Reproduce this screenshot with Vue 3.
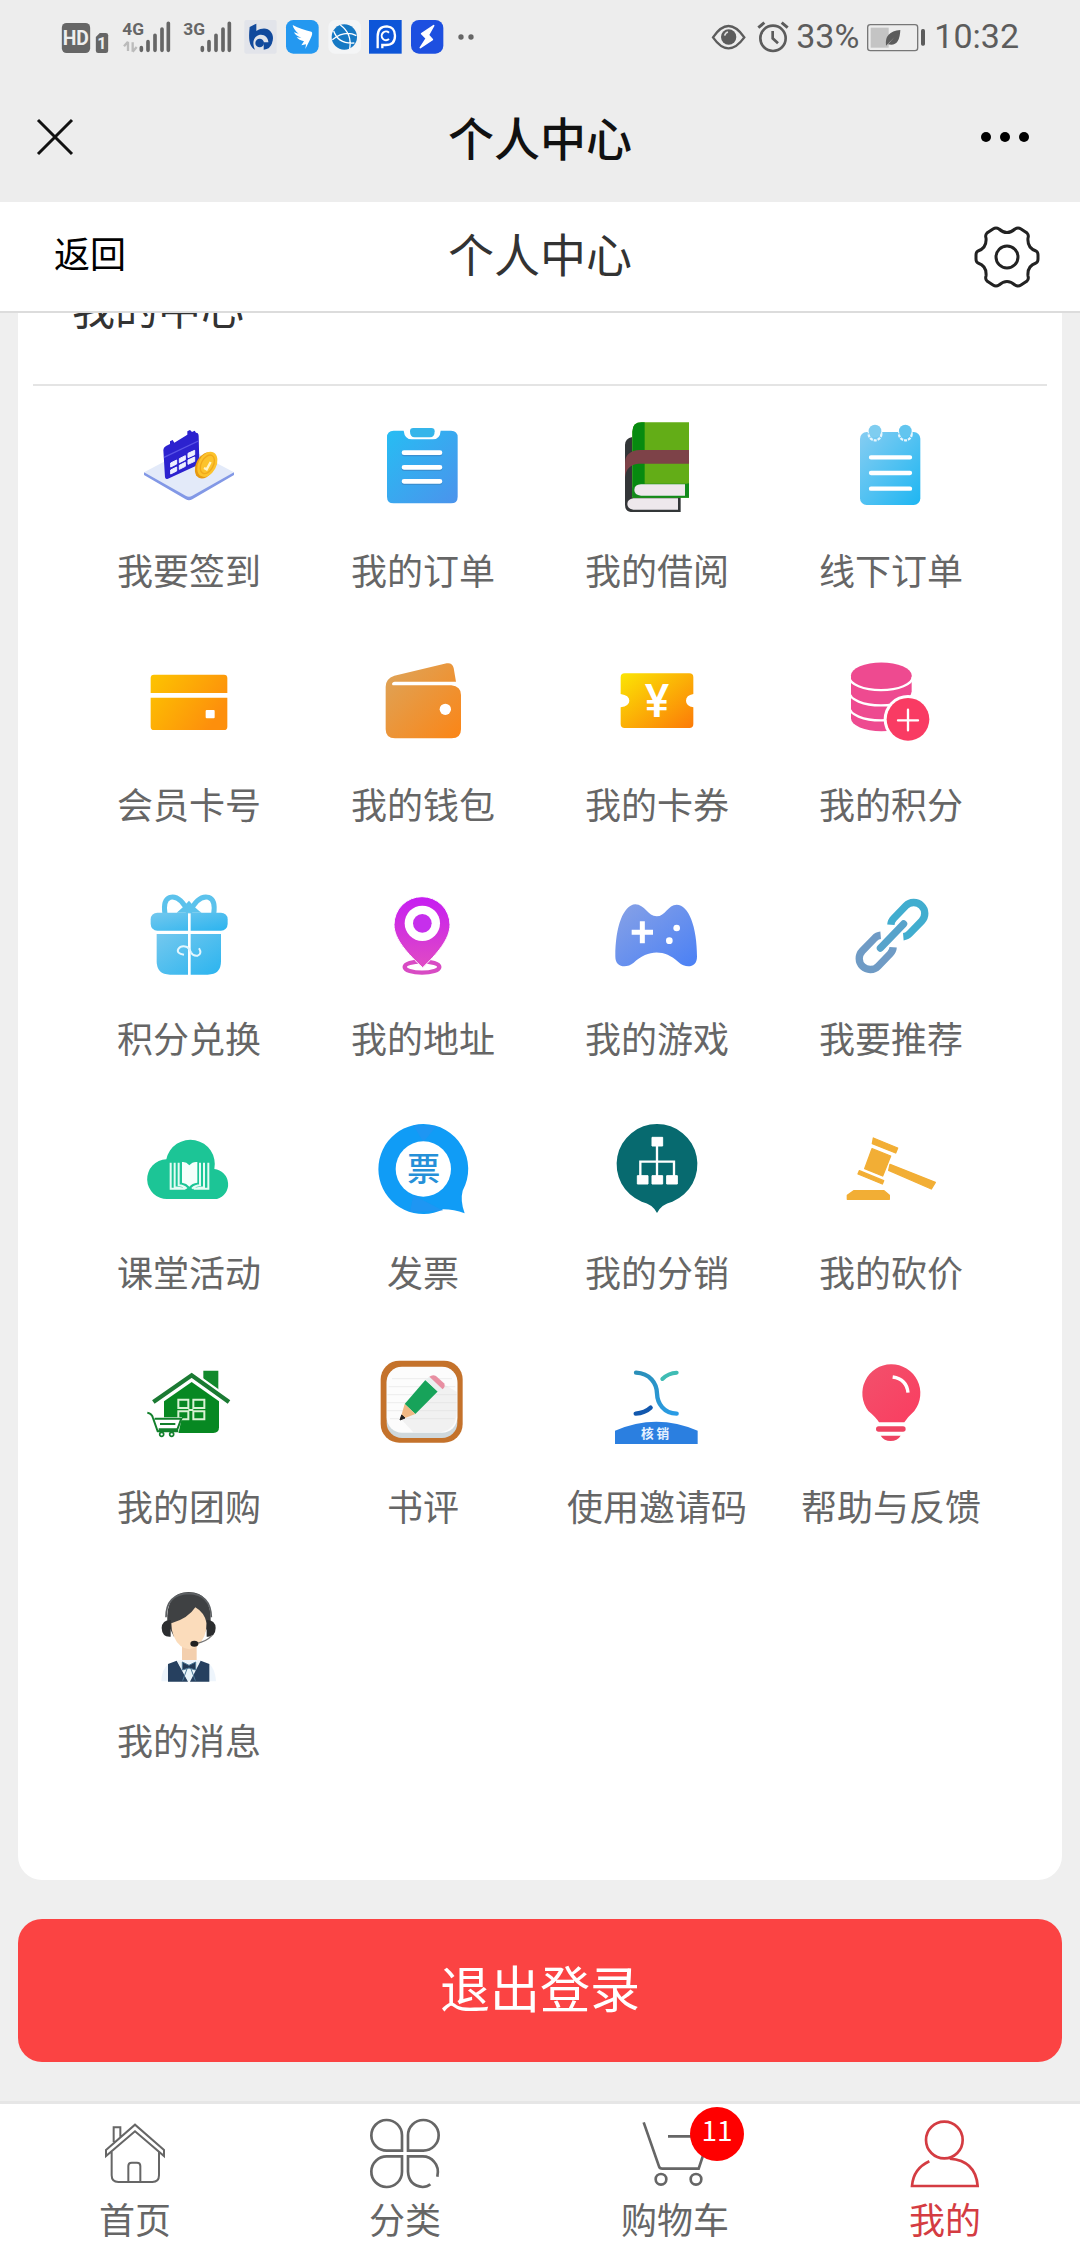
<!-- PersonalCenter -->
<template>
  <div class="page">
    <header class="header">
      <div class="status-bar">
        <div class="status-group status-left">
          <svg class="status-hd" viewBox="180 51 141 108">
            <rect x="181" y="66" width="85" height="90" rx="14" fill="#666" />
            <text x="223" y="132" text-anchor="middle" font-size="58" font-weight="700" fill="#eee">HD</text>
            <path d="M283 108l12-12h18q7 0 7 7v46q0 7-7 7h-23q-7 0-7-7z" fill="#666" />
            <text x="301" y="144" text-anchor="middle" font-size="48" font-weight="700" fill="#eee">1</text>
          </svg>
          <svg v-for="net in networks" :key="net" class="status-signal" viewBox="351 51 147 108">
            <text x="355" y="102" font-size="52" font-weight="700" fill="#666">{{ net }}</text>
            <path v-if="net === '4G'" d="M372 122v28M372 122l-12 14M386 152v-28M386 152l12-14" stroke="#bbb" stroke-width="7" fill="none" />
            <path d="M412 140v8M432 122v26M453 103v45M474 84v64M493 67v81" stroke="#666" stroke-width="11" stroke-linecap="round" />
          </svg>
          <div class="status-apps">
            <svg viewBox="702 51 108 108">
              <rect x="706" y="57" width="97" height="101" rx="6" fill="#e2e4ea" />
              <path d="M722 78l20-10v22c30-18 50 0 50 22 0 12-6 20-14 24 4-26-12-38-28-34-16 5-22 22-12 44-18-10-20-32-16-68z" fill="#124a9c" />
              <circle cx="752" cy="126" r="13" fill="#124a9c" />
              <path d="M764 124h26q-6 22-26 22" fill="#124a9c" />
            </svg>
            <svg viewBox="825 51 108 108">
              <rect x="828" y="57" width="98" height="101" rx="22" fill="#2498f0" />
              <path d="M848 72c18 10 38 16 56 20 5 3 2 12-4 24l-14 28 2-14-14 3 8-12c-10-2-18-6-22-12l14 1c-12-4-20-10-22-16l14 4c-10-8-16-16-18-26z" fill="#fff" />
            </svg>
            <svg viewBox="948 51 108 108">
              <rect x="952" y="57" width="98" height="101" rx="20" fill="#f4f5f6" />
              <circle cx="1000" cy="108" r="38" fill="#1679c4" />
              <path d="M988 72q36 26 28 72M964 116q38-30 72-12M968 90q14 40 62 36" stroke="#fff" stroke-width="4" fill="none" />
            </svg>
            <svg viewBox="1071 51 108 108">
              <rect x="1071" y="57" width="98" height="101" fill="#0d55d8" />
              <path d="M1097 142v-36q0-30 28-30 24 2 24 28 0 28-28 28h-10v10" stroke="#fff" stroke-width="7" fill="none" />
              <path d="M1131 95a13 13 0 1 0 0 19" stroke="#fff" stroke-width="6" fill="none" />
            </svg>
            <svg viewBox="1194 51 108 108">
              <rect x="1194" y="57" width="97" height="101" rx="24" fill="#1d4fe0" />
              <path d="M1262 74l-36 24 14 14-18 28 36-24-12-14z" fill="#fff" stroke="#fff" stroke-width="5" stroke-linejoin="round" />
            </svg>
          </div>
          <svg class="status-more" viewBox="1335 51 45 108">
            <circle cx="1341" cy="108" r="8" fill="#666" />
            <circle cx="1371" cy="108" r="8" fill="#666" />
          </svg>
        </div>
        <div class="status-group status-right">
          <svg class="status-icon" viewBox="150 51 108 108">
            <path d="M165 109q46-68 94 0q-48 66-94 0z" fill="none" stroke="#5c5c5c" stroke-width="7" />
            <circle cx="212" cy="108" r="23" fill="#5c5c5c" />
            <path d="M200 104q2-9 10-11" stroke="#ddd" stroke-width="5" fill="none" />
          </svg>
          <svg class="status-icon" viewBox="279 51 108 108">
            <circle cx="342" cy="112" r="38" fill="none" stroke="#5c5c5c" stroke-width="8" />
            <path d="M298 80l18-15M368 65l18 15" stroke="#5c5c5c" stroke-width="9" />
            <path d="M341 90v22l16 15" stroke="#5c5c5c" stroke-width="8" fill="none" />
          </svg>
          <span class="status-text">33%</span>
          <svg class="status-battery" viewBox="621 51 177 108">
            <rect x="623" y="71" width="150" height="78" rx="8" fill="none" stroke="#777" stroke-width="4" />
            <rect x="632" y="80" width="54" height="60" fill="#c4c4c4" />
            <path d="M678 134q-6-42 43-47q-2 52-37 43l20-22z" fill="#5c5c5c" />
            <rect x="783" y="84" width="12" height="50" rx="5" fill="#5c5c5c" />
          </svg>
          <span class="status-text">10:32</span>
        </div>
      </div>
      <div class="nav-bar">
        <button class="icon-button" type="button" aria-label="关闭">
          <svg class="close-icon" viewBox="0 0 38 38">
            <path d="M2 2l34 34M36 2L2 36" stroke="#111" stroke-width="3" />
          </svg>
        </button>
        <h1 class="nav-title">个人中心</h1>
        <button class="icon-button nav-more" type="button" aria-label="更多">
          <svg class="more-icon" viewBox="0 0 50 12">
            <circle cx="6" cy="6" r="5" />
            <circle cx="25" cy="6" r="5" />
            <circle cx="44" cy="6" r="5" />
          </svg>
        </button>
      </div>
      <div class="app-bar">
        <button class="back-button" type="button">返回</button>
        <h2 class="app-title">个人中心</h2>
        <button class="icon-button settings" type="button" aria-label="设置">
          <svg class="gear-icon" viewBox="0 0 66 62">
            <path
              d="M19 3Q22 1 25 3Q33 10 41 3Q44 1 47 3L53 7Q55 9 54 12Q53 22 62 25Q64 26 64 29V33Q64 36 62 37Q53 40 54 50Q55 53 53 55L47 59Q44 61 41 59Q33 52 25 59Q22 61 19 59L13 55Q11 53 12 50Q13 40 4 37Q2 36 2 33V29Q2 26 4 25Q13 22 12 12Q11 9 13 7Z"
              fill="none" stroke="#222" stroke-width="3" />
            <circle cx="33" cy="31" r="11" fill="none" stroke="#222" stroke-width="3" />
          </svg>
        </button>
      </div>
    </header>

    <main class="content">
      <section class="card">
        <h3 class="card-title">我的中心</h3>
        <div class="menu-grid">
          <a v-for="item in menu" :key="item.label" class="menu-item" href="#">
            <svg class="menu-icon" :viewBox="item.box" v-html="item.icon"></svg>
            <span class="menu-label">{{ item.label }}</span>
          </a>
        </div>
      </section>
      <button class="logout" type="button">退出登录</button>
    </main>

    <nav class="tab-bar">
      <a
        v-for="tab in tabs"
        :key="tab.label"
        class="tab"
        :class="{ active: tab.active }"
        href="#"
      >
        <span class="tab-icon-wrap">
          <svg class="tab-icon" :viewBox="tab.box" v-html="tab.icon"></svg>
          <span v-if="tab.badge" class="badge">{{ tab.badge }}</span>
        </span>
        <span class="tab-label">{{ tab.label }}</span>
      </a>
    </nav>
  </div>
</template>

<script setup>
const networks = ['4G', '3G'];

const gradient = (id, from, to, x2 = 1, y2 = 1) =>
  `<linearGradient id="${id}" x1="0" y1="0" x2="${x2}" y2="${y2}"><stop offset="0" stop-color="${from}"/><stop offset="1" stop-color="${to}"/></linearGradient>`;

const menu = [
  {
    label: '我要签到',
    box: '132 66 270 270',
    icon: `
      <path d="M132 217v8l125 73q10 6 20 0l125-73v-8z" fill="#8298e6"/>
      <path d="M132 217l126-66q9-5 18 0l126 66-125 70q-10 6-20 0z" fill="#e3eaf9"/>
      <path d="M190 150q0-8 8-12l12-6v-8l8-4 5 8 39-24v-10l8-4 6 6 8-4 4 6q8 0 8 10l2 78q0 6-6 10l-88 40q-7 4-9-4z" fill="#2c22cf"/>
      <path d="M192 172l103-49" stroke="#5b55e6" stroke-width="4"/>
      <path d="M212 189l18-9v12l-18 9zM238 176l18-9v12l-18 9zM264 160l20-9v13l-20 9zM212 210l18-9v12l-18 9zM238 196l18-9v12l-18 9zM264 180l20-9v13l-20 9z" fill="#eef0ff" stroke="#eef0ff" stroke-width="3"/>
      <ellipse cx="316" cy="196" rx="28" ry="42" transform="rotate(28 316 196)" fill="#e79a12"/>
      <ellipse cx="322" cy="193" rx="27" ry="40" transform="rotate(28 322 193)" fill="#fcc32c"/>
      <ellipse cx="322" cy="193" rx="18" ry="30" transform="rotate(28 322 193)" fill="none" stroke="#f0a91c" stroke-width="4"/>
      <path d="M312 204l8 4 12-22" stroke="#fff3c4" stroke-width="7" fill="none"/>`
  },
  {
    label: '我的订单',
    box: '834 66 270 270',
    icon: `${gradient('order', '#27bdf3', '#4b93ec')}
      <path d="M881 92h30q3 26 25 26h62q22 0 24-26h31q20 0 20 20v178q0 20-20 20H881q-20 0-20-20V112q0-20 20-20z" fill="url(#order)"/>
      <path d="M940 84h54q10 0 10 10 0 18-14 18h-46q-14 0-14-18 0-10 10-10z" fill="#35b5ea"/>
      <path d="M912 162h108M912 206h108M912 248h108" stroke="#3a8fd0" stroke-width="14" stroke-linecap="round"/>
      <path d="M912 158h108M912 202h108M912 244h108" stroke="#fff" stroke-width="14" stroke-linecap="round"/>`
  },
  {
    label: '我的借阅',
    box: '156 66 270 270',
    icon: `
      <path d="M195 135q0-20 22-24v180h145v45H212q-17-2-17-22z" fill="#333638"/>
      <path d="M217 95q0-28 28-28h142v226H217z" fill="#63ad17"/>
      <path d="M217 95q0-28 28-28h9v185l-20 8-17 30z" fill="#078a10"/>
      <path d="M387 150H240q-45 2-45 40v42q4-38 40-41h152z" fill="#7d4248"/>
      <path d="M387 250v43H217v-30l20-12h142z" fill="#128a1c"/>
      <path d="M243 253h132v34H243q-20-2-20-17 0-16 20-17z" fill="#eee8ec"/>
      <path d="M220 295h134v34H220q-18-3-18-17t18-17z" fill="#eee8ec"/>`
  },
  {
    label: '线下订单',
    box: '858 66 270 270',
    icon: `${gradient('offline', '#86cdf2', '#1eb6f2')}
      <rect x="900" y="96" width="181" height="219" rx="20" fill="url(#offline)"/>
      <circle cx="945" cy="102" r="19" fill="none" stroke="#e8f6fd" stroke-width="7" stroke-dasharray="9 3"/>
      <circle cx="1036" cy="102" r="19" fill="none" stroke="#e8f6fd" stroke-width="7" stroke-dasharray="9 3"/>
      <circle cx="945" cy="93" r="19" fill="#7fcdf0"/>
      <circle cx="1036" cy="93" r="19" fill="#62c5ef"/>
      <path d="M933 172h117M933 219h117M933 266h117" stroke="#fff" stroke-width="13" stroke-linecap="round"/>`
  },
  {
    label: '会员卡号',
    box: '132 768 270 270',
    icon: `${gradient('card', '#fdc400', '#fd8f0c', 1, 0.5)}
      <path d="M162 824h210q10 0 10 10v45H152v-45q0-10 10-10zM152 893h230v87q0 10-10 10H162q-10 0-10-10z" fill="url(#card)"/>
      <rect x="317" y="930" width="27" height="25" rx="3" fill="#fff"/>`
  },
  {
    label: '我的钱包',
    box: '834 768 270 270',
    icon: `${gradient('wallet', '#dca55c', '#fb8516')}
      <path d="M857 860q0-24 26-33l157-37q17-3 21 14l7 41H884q-12 3-6 11h176q29 3 29 29v103q0 27-28 27H885q-28 0-28-27z" fill="url(#wallet)"/>
      <circle cx="1036" cy="928" r="17" fill="#fff"/>`
  },
  {
    label: '我的卡券',
    box: '156 768 270 270',
    icon: `${gradient('coupon', '#fbe504', '#fc7a08')}
      <path d="M194 820h194q12 0 12 12v50q-22 4-22 20t22 20v50q0 12-12 12H194q-12 0-12-12v-50q26-4 26-20t-26-20v-50q0-12 12-12z" fill="url(#coupon)"/>
      <text x="291" y="951" text-anchor="middle" font-family="Roboto" font-weight="500" font-size="138" fill="#fff">¥</text>`
  },
  {
    label: '我的积分',
    box: '858 768 270 270',
    icon: `
      <path d="M873 826a90 38 0 0 1 182 0v129a90 38 0 0 1-182 0z" fill="#ee4a90"/>
      <path d="M868 831a92 38 0 0 0 190 0M868 877a92 38 0 0 0 190 0M868 922a92 38 0 0 0 190 0" fill="none" stroke="#fff" stroke-width="7"/>
      <circle cx="1044" cy="958" r="73" fill="#fff"/>
      <circle cx="1044" cy="958" r="64" fill="#f93b63"/>
      <path d="M1014 961h60M1044 929v62" stroke="#fff" stroke-width="7" stroke-linecap="round"/>`
  },
  {
    label: '积分兑换',
    box: '132 90 270 270',
    icon: `${gradient('gift', '#74c8ee', '#2bb4ef')}
      <path d="M266 158Q240 104 210 112q-22 8-15 50M268 158q26-54 58-46 22 8 15 50" fill="none" stroke="#5cc2ec" stroke-width="15"/>
      <path d="M230 158q18-14 37-36 20 24 38 36z" fill="#5cc2ec"/>
      <rect x="152" y="158" width="231" height="54" rx="20" fill="url(#gift)"/>
      <path d="M170 222h193v82q0 40-40 40H210q-40 0-40-40z" fill="url(#gift)"/>
      <path d="M268 160v186" stroke="#fff" stroke-width="8"/>
      <path d="M252 284q-24-4-17-17 8-12 26-6 8 4 12 16 6 12 20 10 14-6 4-22" fill="none" stroke="#e3f6fe" stroke-width="6"/>`
  },
  {
    label: '我的地址',
    box: '834 90 270 270',
    icon: `${gradient('pin', '#c61df2', '#e04bc4', 0, 1)}
      <ellipse cx="966" cy="321" rx="52" ry="17" fill="none" stroke="#d84bc4" stroke-width="13"/>
      <path d="M966 110a84 84 0 0 1 84 84c0 44-40 88-82 129-44-41-86-85-86-129a84 84 0 0 1 84-84z" fill="url(#pin)" stroke="#fff" stroke-width="3"/>
      <circle cx="967" cy="190" r="53" fill="#fff"/>
      <circle cx="967" cy="190" r="28" fill="#c62fec"/>`
  },
  {
    label: '我的游戏',
    box: '156 90 270 270',
    icon: `${gradient('game', '#88a2e6', '#4a80f5')}
      <path d="M166 290c0-90 24-155 60-157 28 0 38 36 64 36s34-35 60-35c36 0 61 66 61 156 0 32-32 38-56 16-42-38-90-38-134 2-22 18-55 14-55-18z" fill="url(#game)"/>
      <path d="M247 184v66M215 217h64" stroke="#fff" stroke-width="15"/>
      <circle cx="350" cy="204" r="10" fill="#fff"/>
      <circle cx="328" cy="242" r="10" fill="#fff"/>`
  },
  {
    label: '我要推荐',
    box: '858 90 270 270',
    icon: `
      <g transform="translate(996 228) rotate(-46)" fill="none" stroke-width="22">
        <path d="M-22-26q-8-7-20-7h-52a33 33 0 0 0 0 66h52q12 0 20-7" stroke="#6f9bc5"/>
        <path d="M22-26q8-7 20-7h52a33 33 0 0 1 0 66H42q-12 0-20-7" stroke="#41adcf"/>
        <path d="M-50 0H50" stroke="#57a3cb" stroke-linecap="round"/>
      </g>`
  },
  {
    label: '课堂活动',
    box: '132 792 270 270',
    icon: `
      <path d="M203 1017a59 59 0 0 1-4-119 73 73 0 0 1 144 29 46 46 0 0 1 8 90z" fill="#1cc596"/>
      <path d="M268 916q-10-12-22-10v62q14 2 22 12 8-10 24-12v-62q-14-2-24 10z" fill="#f4fffb"/>
      <path d="M236 908v68q14 0 24 10M224 908v74l30 4M212 908v78h44M300 908v68q-14 0-24 10M312 908v74l-30 4M325 908v78h-44" fill="none" stroke="#e6fbf4" stroke-width="6"/>`
  },
  {
    label: '发票',
    box: '834 792 270 270',
    icon: `
      <path d="M970 792a135 135 0 0 1 118 200q-8 30 6 68-32-12-64-12a135 135 0 1 1-60-256z" fill="#109cf6"/>
      <path d="M940 796l30 50 40-48zM930 1056l10-50 90 46z" fill="#2b8ff0" opacity="0.5"/>
      <circle cx="970" cy="927" r="83" fill="#fff"/>
      <text x="971" y="964" text-anchor="middle" font-size="100" font-weight="500" fill="#2590d8">票</text>`
  },
  {
    label: '我的分销',
    box: '156 792 270 270',
    icon: `
      <path d="M291 792a121 121 0 0 1 46 233q-34 8-46 34-12-26-46-34a121 121 0 0 1 46-233z" fill="#076a6f"/>
      <path d="M291 850v105M241 955v-50h101v50" fill="none" stroke="#fff" stroke-width="7"/>
      <path d="M276 832h32v26h-32zM232 947h32v25h-32zM276 947h32v25h-32zM320 947h32v25h-32z" fill="#fff" stroke="#fff" stroke-width="3" stroke-linejoin="round"/>`
  },
  {
    label: '我的砍价',
    box: '858 792 270 270',
    icon: `
      <g fill="#f2ae35" stroke="#f2ae35" stroke-width="4" stroke-linejoin="round">
        <path d="M940 834l73 30-6 15-70-28z"/>
        <path d="M936 866l56 22-24 60-54-22z"/>
        <path d="M898 932l73 30-4 10-73-30z"/>
        <path d="M990 913l136 54-12 20-128-56z"/>
        <path d="M882 992h90l16 14v12H862v-12z"/>
      </g>`
  },
  {
    label: '我的团购',
    box: '132 84 270 270',
    icon: `
      <path d="M310 122h45v66l-45-32z" fill="#128a2c"/>
      <path d="M192 214l83-58 82 58v78q0 17-17 17H192z" fill="#078822"/>
      <path d="M160 216l115-80 112 80" fill="none" stroke="#fff" stroke-width="26"/>
      <path d="M160 216l115-80 112 80" fill="none" stroke="#1b7a33" stroke-width="13"/>
      <path d="M235 209h30v25h-30zM280 209h33v25h-33zM235 244h30v24h-30zM280 244h33v24h-33zM265 240h15" fill="none" stroke="#d9f2d4" stroke-width="6"/>
      <path d="M160 262h86l-12 54h-62z" fill="#fff"/>
      <path d="M142 248q14 2 17 16l14 40h62M164 266h80l-12 32h-56M180 282h46" fill="none" stroke="#12802c" stroke-width="6"/>
      <circle cx="185" cy="313" r="6" fill="#fff" stroke="#12802c" stroke-width="5"/>
      <circle cx="215" cy="313" r="6" fill="#fff" stroke="#12802c" stroke-width="5"/>`
  },
  {
    label: '书评',
    box: '834 84 270 270',
    icon: `
      <rect x="842" y="92" width="246" height="246" rx="56" fill="#c4722b"/>
      <rect x="860" y="112" width="212" height="212" rx="46" fill="#cfd8dc"/>
      <rect x="860" y="110" width="212" height="198" rx="46" fill="#fcfcfc"/>
      <path d="M876 146h180M866 170h200M862 194h208M862 218h208M862 242h208M870 266h194" stroke="#ececec" stroke-width="3"/>
      <path d="M1035 165l35 20v60q0 55-50 62h-80l-35-38 40-20z" fill="#ddd" opacity="0.35"/>
      <path d="M976 150l38 34-68 68-32-30z" fill="#17a35a"/>
      <path d="M914 222l32 30-46 18z" fill="#f0b884"/>
      <path d="M905 255l10 9-15 6z" fill="#222" stroke="#222" stroke-width="3"/>
      <path d="M976 150l12-10 40 36-14 10z" fill="#e9efef"/>
      <path d="M988 140q10-8 20-2l24 22q6 8-4 18z" fill="#e88fa2"/>`
  },
  {
    label: '使用邀请码',
    box: '156 84 270 270',
    icon: `${gradient('code', '#2a8fb8', '#2a9ce6')}
      <path d="M228 128c42 2 62 32 63 62s20 60 59 61" fill="none" stroke="url(#code)" stroke-width="13" stroke-linecap="round"/>
      <path d="M307 147q18-18 43-19" fill="none" stroke="#3fbcb4" stroke-width="12" stroke-linecap="round"/>
      <path d="M227 251q28-2 45-18" fill="none" stroke="#1258ae" stroke-width="13" stroke-linecap="round"/>
      <path d="M165 342v-40q124-54 248 0v40z" fill="#2b7fe0"/>
      <text x="285" y="325" text-anchor="middle" font-size="38" font-weight="700" fill="#e6f1ff">核 销</text>`
  },
  {
    label: '帮助与反馈',
    box: '858 84 270 270',
    icon: `${gradient('bulb', '#f2516c', '#fa3d60')}
      <path d="M993 103a87 87 0 0 1 70 140q-20 18-30 34h-76q-10-16-32-34a87 87 0 0 1 68-140z" fill="url(#bulb)"/>
      <path d="M998 141q42 6 46 47" fill="none" stroke="#fff" stroke-width="10"/>
      <rect x="948" y="289" width="89" height="16" rx="8" fill="#ee4462"/>
      <path d="M962 317h60q-10 16-30 16t-30-16z" fill="#ee4462"/>`
  },
  {
    label: '我的消息',
    box: '132 786 270 270',
    icon: `
      <path d="M202 880q-6-94 64-94t66 94l-20 30-90 10z" fill="#3f4143"/>
      <path d="M246 930h44v62l-22 16-22-16z" fill="#f3cfae"/>
      <path d="M214 880q50-14 72-48 28 16 34 48 0 44-28 68-24 20-50 0-28-24-28-68z" fill="#fbdcbb"/>
      <path d="M198 862q0-70 68-72 66 2 68 72" fill="none" stroke="#5d6063" stroke-width="5"/>
      <path d="M212 870v50q-26 2-27-26 1-24 27-24zM320 870v50q26 2 27-26-1-24-27-24z" fill="#2b2d2f"/>
      <path d="M336 916q-18 20-48 24" fill="none" stroke="#777" stroke-width="4"/>
      <ellipse cx="283" cy="941" rx="12" ry="9" fill="#222"/>
      <path d="M184 1054q0-36 22-52l30-12h62l30 12q18 16 20 52z" fill="#eef5fc"/>
      <path d="M204 1002l26-10 34 63h-60zM328 1002l-26-10-32 63h58z" fill="#26405f"/>
      <path d="M232 992l34 63 32-63-32 14z" fill="#e7f3f8"/>
      <path d="M247 996l20 10 20-10v24l-20-6-20 6zM262 1014l-14 38M272 1014l14 38" fill="#233a56" stroke="#4c7896" stroke-width="3"/>`
  }
];

const tabs = [
  {
    label: '首页',
    box: '117 78 216 216',
    icon: `<g fill="none" stroke="currentColor" stroke-width="6">
      <path d="M161 156v-44h20v30M138 180l87-76 87 76v18l-87-74-87 74zM155 186v70q0 20 20 20h102q20 0 20-20v-70M205 276v-48q0-10 10-10h16q10 0 10 10v48"/>
    </g>`
  },
  {
    label: '分类',
    box: '927 78 216 216',
    icon: `<g fill="none" stroke="currentColor" stroke-width="8">
      <path d="M1026 182h-44a46 46 0 1 1 44-46zM1044 182v-46a46 46 0 1 1 46 46zM1026 199h-44a46 46 0 1 0 44 46zM1132 260q6-28-10-45-12-16-34-16h-44v46q2 42 44 46 14 0 23-8"/>
    </g>`
  },
  {
    label: '购物车',
    box: '117 78 216 216',
    badge: 11,
    icon: `<g fill="none" stroke="currentColor" stroke-width="8">
      <path d="M131 97l46 132q2 7 10 7h109l32-97H204"/>
      <circle cx="183" cy="268" r="16"/>
      <circle cx="288" cy="268" r="16"/>
    </g>`
  },
  {
    label: '我的',
    box: '927 78 216 216',
    active: true,
    icon: `<g fill="none" stroke="currentColor" stroke-width="8">
      <circle cx="1033" cy="150" r="55"/>
      <path d="M988 214q-48 22-52 74h197q-6-76-84-82"/>
    </g>`
  }
];
</script>

<style>
body {
  margin: 0;
  background: #efefef;
}
</style>

<style scoped>
.page {
  display: flex;
  flex-direction: column;
  min-height: 100vh;
  background: #efefef;
  font-family: "Noto Sans CJK SC", "Noto Sans", sans-serif;
  color: #333;
}

a {
  color: inherit;
  text-decoration: none;
}

button {
  margin: 0;
  padding: 0;
  border: 0;
  background: none;
  font-family: inherit;
}

h1,
h2,
h3 {
  margin: 0;
}

svg {
  display: block;
  overflow: visible;
}

/* Header */
.header {
  background: #ededed;
}

.status-bar {
  display: flex;
  justify-content: space-between;
  height: 72px;
  padding: 0 61px;
}

.status-group {
  display: flex;
  align-items: center;
  font-family: Roboto, sans-serif;
}

.status-left {
  gap: 12px;
}

.status-right {
  gap: 8px;
}

.status-apps {
  display: flex;
  gap: 6px;
}

.status-apps svg,
.status-icon {
  width: 36px;
  height: 36px;
}

.status-hd {
  width: 48px;
  height: 36px;
}

.status-signal {
  width: 49px;
  height: 36px;
}

.status-more {
  width: 15px;
  height: 36px;
}

.status-battery {
  width: 59px;
  height: 36px;
}

.status-text {
  font-size: 34px;
  line-height: 36px;
  color: #5c5c5c;
}

.nav-bar,
.app-bar {
  display: grid;
  grid-template-columns: 1fr auto 1fr;
  align-items: center;
}

.nav-bar {
  height: 130px;
  padding: 0 36px;
}

.app-bar {
  height: 109px;
  padding: 0 40px;
  background: #fff;
  border-bottom: 2px solid #dcdcdc;
}

.icon-button {
  justify-self: start;
}

.nav-more,
.settings {
  justify-self: end;
}

.nav-more {
  margin-right: 14px;
}

.close-icon {
  width: 38px;
  height: 38px;
}

.more-icon {
  width: 50px;
  height: 12px;
}

.gear-icon {
  width: 66px;
  height: 62px;
}

.nav-title,
.app-title {
  font-size: 46px;
  line-height: 60px;
}

.nav-title {
  padding-bottom: 2px;
  font-weight: 500;
  color: #111;
}

.app-title {
  padding-bottom: 10px;
  font-weight: 400;
}

.back-button {
  justify-self: start;
  padding: 0 0 10px 14px;
  font-size: 36px;
  line-height: 54px;
  color: #000;
}

/* Content scrolls under the header */
.content {
  flex: 1;
  padding: 0 18px 39px;
  overflow: hidden;
}

.card {
  margin-top: -85px;
  padding-bottom: 90px;
  border-radius: 24px;
  background: #fff;
}

.card-title {
  margin: 0 15px;
  padding-left: 39px;
  border-bottom: 2px solid #e4e4e4;
  font-size: 43px;
  font-weight: 400;
  line-height: 156px;
}

.menu-grid {
  display: grid;
  grid-template-columns: repeat(4, 1fr);
  padding: 0 54px;
}

.menu-item {
  display: flex;
  flex-direction: column;
  align-items: center;
  gap: 30px;
  padding: 36px 0 24px;
}

.menu-icon {
  width: 90px;
  height: 90px;
}

.menu-label {
  font-size: 36px;
  line-height: 54px;
  color: #666;
  white-space: nowrap;
}

.logout {
  display: block;
  width: 100%;
  height: 143px;
  margin-top: 39px;
  padding-bottom: 10px;
  border-radius: 24px;
  background: #fb4343;
  font-size: 50px;
  color: #fff;
}

/* Bottom tabs */
.tab-bar {
  display: grid;
  grid-template-columns: repeat(4, 1fr);
  padding: 12px 0 8px;
  border-top: 3px solid #e6e6e6;
  background: #fff;
}

.tab {
  display: flex;
  flex-direction: column;
  align-items: center;
  gap: 12px;
  color: #666;
}

.tab.active {
  color: #d43c42;
}

.tab-icon-wrap {
  position: relative;
}

.tab-icon {
  width: 72px;
  height: 72px;
}

.badge {
  position: absolute;
  top: -9px;
  left: 51px;
  box-sizing: border-box;
  width: 54px;
  height: 54px;
  border-radius: 50%;
  background: #f00;
  font-size: 28px;
  line-height: 44px;
  text-align: center;
  color: #fff;
}

.tab-label {
  font-size: 36px;
  line-height: 36px;
}
</style>
